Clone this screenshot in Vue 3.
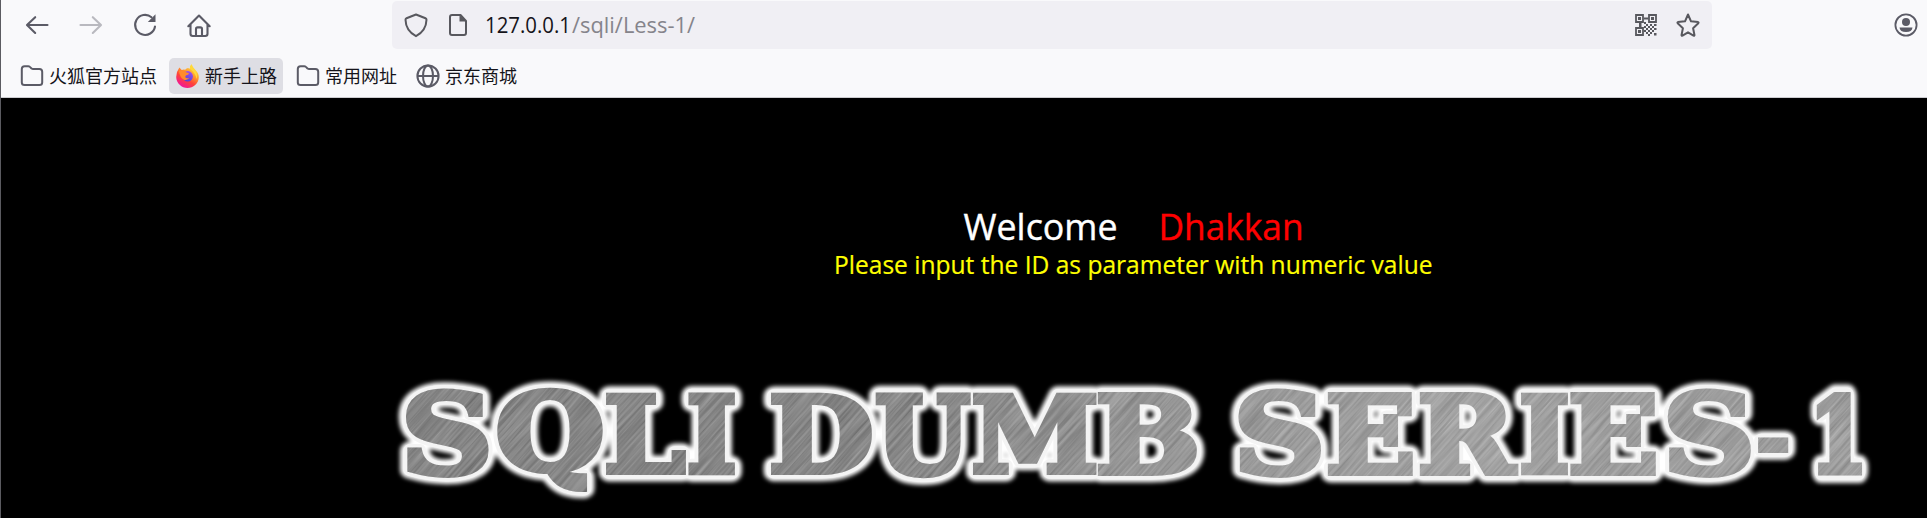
<script setup>
const bookmarks = [
  { kind: 'folder', label: '火狐官方站点', name: 'official' },
  { kind: 'firefox', label: '新手上路', name: 'start' },
  { kind: 'folder', label: '常用网址', name: 'common' },
  { kind: 'globe', label: '京东商城', name: 'shop' },
]

// Banner letters: character and ink box (left, right, top, bottom)
const boxes = [
  ['S', 405, 489.5, 388, 478], ['Q', 497, 603, 387.5, 493], ['L', 605, 687, 392, 475.5], ['I', 687.5, 736, 392, 475.5],
  ['D', 770, 872.5, 392, 475.5], ['U', 875, 972, 392, 478], ['M', 972.5, 1096.5, 392, 475.5], ['B', 1097, 1197, 392, 476.5],
  ['S', 1237.5, 1322, 388, 478], ['E', 1327, 1414, 392, 476.5], ['R', 1419, 1519, 392, 476.5], ['I', 1520, 1569, 392, 475.5],
  ['E', 1569.5, 1657, 392, 476.5], ['S', 1667, 1752, 388, 478], ['-', 1757.5, 1789, 436, 453], ['1', 1816, 1863, 392, 475.5],
]
const ctx = document.createElement('canvas').getContext('2d')
ctx.font = 'bold 100px "DejaVu Serif"'
const grow = 3.5
const letters = boxes.map(([ch, l, r, t, b]) => {
  const m = ctx.measureText(ch)
  const il = -m.actualBoundingBoxLeft
  const ir = m.actualBoundingBoxRight
  const it = -m.actualBoundingBoxAscent
  const ib = m.actualBoundingBoxDescent
  const sx = (r - l - 2 * grow) / (ir - il)
  const sy = (b - t - 2 * grow) / (ib - it)
  return { ch, tf: `matrix(${sx} 0 0 ${sy} ${l + grow - il * sx} ${t + grow - it * sy - 360})` }
})
</script>

<template>
  <div class="window">
    <header class="chrome">
      <div class="toolbar">
        <nav class="nav">
          <svg class="ic" viewBox="0 0 24 24"><path d="M22.5 12H2.2M10.2 4.2 2 12l8.200 8" /></svg>
          <svg class="ic dim" viewBox="0 0 24 24"><path d="M1.500 12h20.300M13.800 4.200 22 12l-8.200 8" /></svg>
          <svg class="ic" viewBox="0 0 24 24"><path d="M22 13.500A10 10 0 1 1 18.500 4.200" /><path class="solid" d="M22.500 1.300v7.700h-7.700z" /></svg>
          <svg class="ic" viewBox="0 0 24 24"><path d="M1.300 13.200 12 2.500l10.700 10.700M3.500 11.500v9.300q0 2.200 2.200 2.200h12.600q2.200 0 2.200-2.200v-9.300M9 22.500V16q0-1.600 1.600-1.600h2.800Q15 14.400 15 16v6.500" /></svg>
        </nav>
        <div class="urlbar">
          <svg class="shield" viewBox="0 0 24 24"><path d="M12 1.500 21.500 5.300q1 .4 1 1.500C22.300 14 19 19.500 12 23.200 5 19.500 1.700 14 1.500 6.800q0-1.100 1-1.500z" /></svg>
          <svg class="page" viewBox="0 0 20 24"><path d="M12.500 2H4Q2 2 2 4v16q0 2 2 2h12q2 0 2-2V8z" /><path class="solid" d="M11.500 2v6.500h7z" /></svg>
          <svg class="url" viewBox="0 0 220 48">
            <text x="0" y="32" textLength="86" lengthAdjust="spacingAndGlyphs" class="host">127.0.0.1</text>
            <text x="87" y="32" textLength="123" lengthAdjust="spacingAndGlyphs" class="path">/sqli/Less-1/</text>
          </svg>
          <svg class="qr" viewBox="0 0 22 22">
            <path class="frame" d="M1 1h7v7H1zM14 1h7v7h-7zM1 14h7v7H1z" />
            <path class="solid" d="M3 3h3v3H3zM16 3h3v3h-3zM3 16h3v3H3zM9 3.500h4.500v2H9zM4 9h2.500v4H4zM9 8h2v2H9zM11 10h2v2h-2zM9 12h2v2H9zM15 10h2v2h-2zM19 10h2.500v2H19zM13 12h2v2h-2zM17 12h2v2h-2zM11 14h2v2h-2zM15 14h2v2h-2zM19 14h2.500v2H19zM9 16h2v2H9zM13 16h2v2h-2zM17 16h2v2h-2zM11 18h2v2h-2zM15 18h2v2h-2zM13 20h2v2h-2zM19 19h2.500v2.500H19z" />
          </svg>
          <svg class="star" viewBox="0 0 24 24"><path d="m12 1.500 3 6.800 7.100.8q.8.300.2 1.100l-5.200 5 1.400 7q-.1.900-1 .5L12 19.300l-5.500 3.400q-.9.400-1-.5l1.400-7-5.200-5q-.6-.8.200-1.100l7.100-.8z" /></svg>
        </div>
        <svg class="account" viewBox="0 0 24 24"><circle cx="12" cy="12" r="10.600" /><circle class="solid" cx="12" cy="9" r="4" /><path class="solid" d="M5.500 14.500h13q-.5 4.500-6.500 4.500t-6.500-4.500z" /></svg>
      </div>
      <div class="bookmarks">
        <div v-for="b in bookmarks" :key="b.name" class="bm" :class="b.name">
          <svg v-if="b.kind === 'folder'" class="bi" viewBox="0 0 24 24"><path d="M1.800 18.500V5q0-2.800 2.800-2.800h3.600q1 0 1.700.7l1.600 1.500q.6.600 1.600.600h6.300Q22.200 5 22.200 7.800v10.700q0 2.500-2.800 2.500H4.600q-2.800 0-2.800-2.500z" /></svg>
          <svg v-else-if="b.kind === 'globe'" class="bi" viewBox="0 0 24 24"><circle cx="12" cy="12" r="10.600" /><ellipse cx="12" cy="12" rx="5" ry="10.600" /><path d="M1.500 12h21" /></svg>
          <svg v-else class="fox" viewBox="0 0 24 25">
            <defs>
              <linearGradient id="flame" x1=".8" y1=".05" x2=".25" y2=".95"><stop offset="0" stop-color="#fff04a" /><stop offset=".35" stop-color="#ffa02e" /><stop offset=".65" stop-color="#ff4338" /><stop offset="1" stop-color="#f0159b" /></linearGradient>
              <linearGradient id="core" x1=".7" y1="0" x2=".3" y2="1"><stop offset="0" stop-color="#a44df0" /><stop offset="1" stop-color="#4a45d8" /></linearGradient>
            </defs>
            <path fill="url(#flame)" d="M3.500 3.500 6 6.200Q8 5.500 9.500 6 11 4.500 12.500 4.200L14.500 5Q14 2 16.300.300 17 3.500 20.500 6.500 24 10 23.800 14C23.500 20.500 18 25 12 25S.200 20 .200 13.500Q.200 8 3.500 3.500z" />
            <circle cx="12.300" cy="12.800" r="5.400" fill="url(#core)" />
            <path fill="#ff8b2c" d="M3 7q4-1.500 7.500 1.500l3.200 1q-.5 1.800-3.200 2.200l-1 1.800q1.500 2 4.500.8-2 3-5.700 2Q4 14.500 3 7z" />
            <path fill="#ffd83c" d="M14.500 5q-.5-3 1.800-4.700Q17 3.500 20 6.500q3 4 1.500 9Q20 9 14.500 5z" />
          </svg>
          <span>{{ b.label }}</span>
        </div>
      </div>
    </header>
    <main class="content">
      <svg class="welcome" viewBox="0 0 640 84">
        <text x="142.500" y="42" textLength="154" lengthAdjust="spacingAndGlyphs" class="big white">Welcome</text>
        <text x="337.500" y="42" textLength="145" lengthAdjust="spacingAndGlyphs" class="big red">Dhakkan</text>
        <text x="13" y="76" textLength="598.500" lengthAdjust="spacingAndGlyphs" class="msg">Please input the ID as parameter with numeric value</text>
      </svg>
      <svg class="banner" viewBox="0 0 1927 158">
        <defs>
          <filter id="halo" x="0" y="0" width="1927" height="158" filterUnits="userSpaceOnUse"><feGaussianBlur stdDeviation="2.200" /></filter>
          <filter id="brushed" x="0" y="0" width="100%" height="100%" color-interpolation-filters="sRGB">
            <feTurbulence type="fractalNoise" baseFrequency="0.014 0.400" numOctaves="3" seed="8" />
            <feColorMatrix values="0.28 0 0 0 0.410  0.28 0 0 0 0.410  0.28 0 0 0 0.410  0 0 0 0 1" />
          </filter>
          <linearGradient id="sheen" x1="0" x2="1">
            <stop offset="0" stop-color="#000" stop-opacity=".05" /><stop offset=".3" stop-color="#000" stop-opacity=".05" />
            <stop offset=".5" stop-color="#fff" stop-opacity=".08" /><stop offset=".7" stop-color="#fff" stop-opacity=".18" /><stop offset="1" stop-color="#fff" stop-opacity=".12" />
          </linearGradient>
          <mask id="face" x="0" y="0" width="1927" height="158" maskUnits="userSpaceOnUse">
            <text v-for="(l, i) in letters" :key="i" :transform="l.tf" class="glyph face">{{ l.ch }}</text>
          </mask>
        </defs>
        <g filter="url(#halo)"><text v-for="(l, i) in letters" :key="i" :transform="l.tf" class="glyph glow" aria-hidden="true">{{ l.ch }}</text></g>
        <g><text v-for="(l, i) in letters" :key="i" :transform="l.tf" class="glyph rim" aria-hidden="true">{{ l.ch }}</text></g>
        <g mask="url(#face)">
          <g transform="rotate(-48 963 79)"><rect x="200" y="-800" width="1500" height="1800" filter="url(#brushed)" /></g>
          <rect x="380" y="0" width="1500" height="158" fill="url(#sheen)" />
        </g>
      </svg>
    </main>
  </div>
</template>

<style>
body { margin: 0; background: #000; }
</style>
<style scoped>
.window { width: 1927px; height: 518px; box-sizing: border-box; border-left: 1px solid #5b5b60; background: #000; overflow: hidden; }
.chrome { height: 98px; box-sizing: border-box; background: #f9f9fb; border-bottom: 1px solid #ccccd0; }
.toolbar { height: 49px; display: flex; align-items: flex-start; padding-top: 1px; box-sizing: border-box; }
svg { display: block; flex: none; overflow: visible; }
.nav { display: flex; gap: 30px; padding: 12px 0 0 24px; width: 391px; flex: none; box-sizing: border-box; }
.ic { width: 24px; height: 24px; fill: none; stroke: #5b5b66; stroke-width: 2.1; stroke-linejoin: round; stroke-linecap: round; }
.dim { opacity: .4; }
.ic .solid, .page .solid, .qr .solid, .account .solid { fill: currentColor; stroke: none; }
.ic, .account { color: #5b5b66; }
.urlbar { width: 1320px; height: 48px; flex: none; box-sizing: border-box; border-radius: 5px; background: #f0eff4; display: flex; align-items: center; padding: 0 12px; color: #58585e; }
.shield { width: 24px; height: 24px; fill: none; stroke: #58585e; stroke-width: 2; stroke-linejoin: round; }
.page { width: 20px; height: 24px; margin-left: 20px; fill: none; stroke: #58585e; stroke-width: 2; stroke-linejoin: round; }
.url { width: 220px; height: 48px; margin-left: 17px; font: 21.5px "Open Sans", "Noto Sans", sans-serif; }
.host { fill: #15141a; }
.path { fill: #85848b; }
.qr { width: 22px; height: 22px; margin-left: auto; }
.qr .frame { fill: none; stroke: #58585e; stroke-width: 1.8; }
.star { width: 24px; height: 24px; margin-left: 19px; fill: none; stroke: #58585e; stroke-width: 2; stroke-linejoin: round; }
.account { width: 24px; height: 24px; margin: 12px 0 0 182px; }
.account circle:first-child { fill: none; stroke: #5b5b66; stroke-width: 1.8; }
.bookmarks { display: flex; padding: 9px 0 0 11px; font: 18px/36px "Noto Sans CJK SC", sans-serif; color: #15141a; }
.bm { display: flex; align-items: center; height: 36px; padding: 0 6px 0 8px; border-radius: 5px; box-sizing: border-box; margin-right: 7px; white-space: nowrap; }
.bm span { position: relative; top: -1px; }
.official { padding-left: 8px; margin-right: 6px; }
.start { background: #dedee4; padding: 0 6px 0 7px; margin-right: 5px; }
.shop { margin-left: -2px; }
.bi { width: 24px; height: 24px; margin-right: 5px; fill: none; stroke: #5b5b66; stroke-width: 2; }
.fox { width: 23px; height: 24px; margin-right: 6px; }
.content { height: 420px; display: flex; flex-direction: column; align-items: flex-start; padding-top: 100px; box-sizing: border-box; }
.welcome { width: 640px; height: 84px; margin-left: 819.5px; font-family: "Open Sans", "Noto Sans", sans-serif; }
.big { font-size: 37px; }
.white { fill: #fff; stroke: #fff; stroke-width: .4px; }
.red { fill: #f00; stroke: #f00; stroke-width: .4px; }
.msg { font-size: 25px; fill: #ff0; stroke: #ff0; stroke-width: .2px; }
.banner { width: 1927px; height: 158px; margin: 78px 0 0 -1px; }
.glyph { font: bold 100px "DejaVu Serif", serif; stroke-linejoin: round; vector-effect: non-scaling-stroke; }
.glow { fill: none; stroke: #fff; stroke-width: 20px; }
.rim { fill: #f4f4f4; stroke: #f4f4f4; stroke-width: 14px; }
.face { fill: #fff; stroke: #fff; stroke-width: 6.4px; stroke-linejoin: miter; }
</style>
